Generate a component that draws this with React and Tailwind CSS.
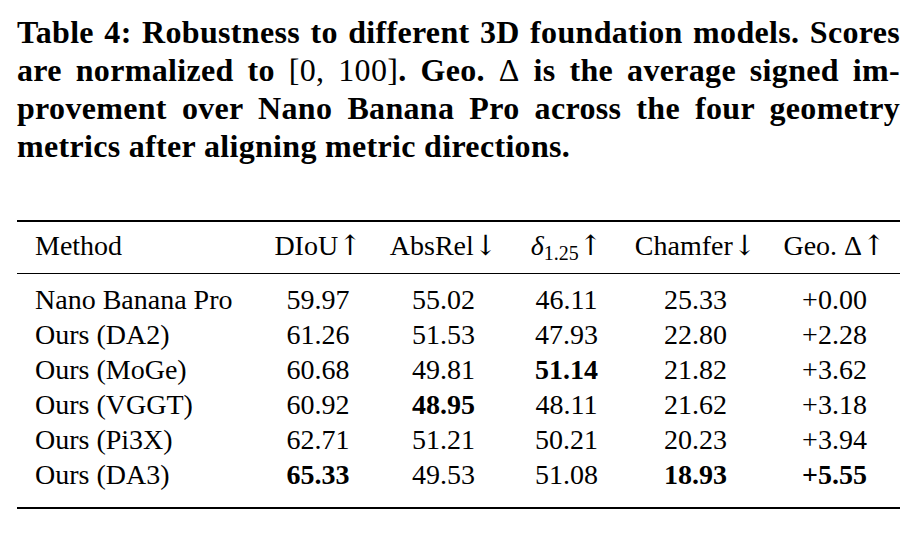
import React from 'react';

const rows = [
  ['Nano Banana Pro', '59.97', '55.02', '46.11', '25.33', '+0.00', []],
  ['Ours (DA2)', '61.26', '51.53', '47.93', '22.80', '+2.28', []],
  ['Ours (MoGe)', '60.68', '49.81', '51.14', '21.82', '+3.62', [3]],
  ['Ours (VGGT)', '60.92', '48.95', '48.11', '21.62', '+3.18', [2]],
  ['Ours (Pi3X)', '62.71', '51.21', '50.21', '20.23', '+3.94', []],
  ['Ours (DA3)', '65.33', '49.53', '51.08', '18.93', '+5.55', [1, 4, 5]],
];

const cols = 'grid grid-cols-[237px_128px_123px_123px_135px_137px]';

function CaptionLine({ children, last }) {
  return (
    <div className={last ? 'text-left' : 'text-justify [text-align-last:justify]'}>
      {children}
    </div>
  );
}

function Arrow({ up }) {
  return (
    <span className="text-[28px] leading-none" style={{ fontFamily: '"DejaVu Serif", serif' }}>
      {up ? '↑' : '↓'}
    </span>
  );
}

export default function App() {
  return (
    <div
      className="w-[921px] h-[533px] bg-white text-black overflow-hidden"
      style={{ fontFamily: '"Liberation Serif", "DejaVu Serif", serif' }}
    >
      <div className="pl-[17px] pr-[21px] pt-[13px] text-[32px] leading-[38px] font-bold tracking-[0.01em]">
        <CaptionLine>Table 4: Robustness to different 3D foundation models. Scores</CaptionLine>
        <CaptionLine>
          are normalized to <span className="font-normal">[0, 100]</span>. Geo. <span className="font-normal">Δ</span> is the average signed im-
        </CaptionLine>
        <CaptionLine>provement over Nano Banana Pro across the four geometry</CaptionLine>
        <CaptionLine last>metrics after aligning metric directions.</CaptionLine>
      </div>

      <div className="ml-[17px] mt-[55px] w-[883px] text-[28px]">
        <div className="border-t-2 border-b-[1.5px] border-black">
          <div className={`${cols} h-[51px] pb-[3px] items-center`}>
            <div className="pl-[18px]">Method</div>
            <div className="text-center">DIoU<Arrow up /></div>
            <div className="text-center">AbsRel<Arrow /></div>
            <div className="text-center">
              <span className="italic">δ</span>
              <span className="relative top-[5px] text-[20px]">1.25</span>
              <Arrow up />
            </div>
            <div className="text-center">Chamfer<Arrow /></div>
            <div className="text-center pl-[6px]">Geo. Δ<Arrow up /></div>
          </div>
        </div>
        <div className="pt-[5px] pb-[18px] border-b-2 border-black">
          {rows.map((r, i) => (
            <div key={i} className={`${cols} h-[35px] items-center`}>
              <div className="pl-[18px] whitespace-nowrap">{r[0]}</div>
              {r.slice(1, 6).map((v, j) => (
                <div
                  key={j}
                  className={`text-center ${j === 4 ? 'pl-[6px]' : ''} ${r[6].includes(j + 1) ? 'font-bold' : ''}`}
                >
                  {v}
                </div>
              ))}
            </div>
          ))}
        </div>
      </div>
    </div>
  );
}
